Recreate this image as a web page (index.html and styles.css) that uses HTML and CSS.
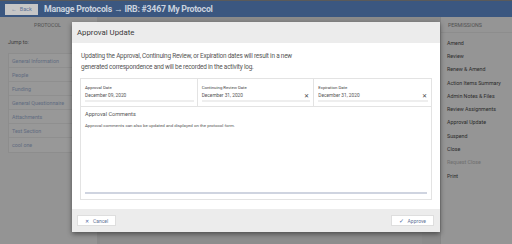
FILE: index.html
```html
<!DOCTYPE html>
<html lang="en">
<head>
<meta charset="utf-8">
<title>Approval Update</title>
<link rel="stylesheet" href="styles.css">
</head>
<body>
<header class="topbar">
  <button class="back-btn"><span class="arrow">←</span> Back</button>
  <h1 class="page-title">Manage Protocols → IRB: #3467 My Protocol</h1>
</header>
<div class="workspace">
  <aside class="nav-pane">
    <div class="pane-tab">PROTOCOL</div>
    <div class="jump-label">Jump to:</div>
    <ul class="section-list">
      <li>General Information</li>
      <li>People</li>
      <li>Funding</li>
      <li>General Questionnaire</li>
      <li>Attachments</li>
      <li>Test Section</li>
      <li>cool one</li>
    </ul>
  </aside>
  <main class="center-pane">
    <div class="content-card"></div>
  </main>
  <aside class="perm-pane">
    <div class="pane-tab perm-tab">PERMISSIONS</div>
    <ul class="perm-list">
      <li>Amend</li>
      <li>Review</li>
      <li>Renew &amp; Amend</li>
      <li>Action Items Summary</li>
      <li>Admin Notes &amp; Files</li>
      <li>Review Assignments</li>
      <li>Approval Update</li>
      <li>Suspend</li>
      <li>Close</li>
      <li class="disabled">Request Close</li>
      <li>Print</li>
    </ul>
  </aside>
  <div class="backdrop"></div>
</div>

<div class="modal">
  <div class="modal-header">Approval Update</div>
  <div class="modal-body">
    <p class="intro">Updating the Approval, Continuing Review, or Expiration dates will result in a new generated correspondence and will be recorded in the activity log.</p>
    <div class="form-box">
      <div class="date-row">
        <div class="date-cell">
          <div class="field-label">Approval Date</div>
          <div class="field-value"><span>December 09, 2020</span></div>
        </div>
        <div class="date-cell">
          <div class="field-label">Continuing Review Date</div>
          <div class="field-value"><span>December 31, 2020</span><span class="clear">✕</span></div>
        </div>
        <div class="date-cell">
          <div class="field-label">Expiration Date</div>
          <div class="field-value"><span>December 31, 2020</span><span class="clear">✕</span></div>
        </div>
      </div>
      <div class="comments">
        <div class="comments-label">Approval Comments</div>
        <div class="comments-help">Approval comments can also be updated and displayed on the protocol form.</div>
        <div class="comments-input"></div>
      </div>
    </div>
  </div>
  <div class="modal-footer">
    <button class="btn"><span class="btn-icon">✕</span>Cancel</button>
    <button class="btn"><span class="btn-icon check">✓</span>Approve</button>
  </div>
</div>
</body>
</html>
```

FILE: styles.css
```css
* { box-sizing: border-box; }
html, body { margin: 0; padding: 0; }
body {
  width: 512px;
  height: 244px;
  overflow: hidden;
  font-family: Roboto, "Liberation Sans", sans-serif;
  background: #e6e6e6;
  position: relative;
}
ul { list-style: none; margin: 0; padding: 0; }

.topbar {
  height: 17px;
  background: #3b5780;
  border-top: 1px solid #5a5a5a;
  display: flex;
  align-items: center;
  padding-left: 5px;
  gap: 6px;
}
.back-btn {
  height: 11px;
  width: 33px;
  border: none;
  background: #c6c6c6;
  color: #5f7396;
  font-family: inherit;
  font-size: 5.5px;
  padding: 0;
  display: flex;
  align-items: center;
  justify-content: center;
  gap: 3px;
}
.page-title {
  margin: 0;
  color: #c9d2de;
  font-size: 8.8px;
  letter-spacing: -0.25px;
  font-weight: 700;
}

.workspace {
  position: relative;
  display: grid;
  grid-template-columns: 97px 1fr 72px;
  height: 227px;
}
.backdrop {
  position: absolute;
  inset: 0;
  background: rgba(0, 0, 0, 0.4);
}

.nav-pane {
  background: #f7f7f7;
  padding-right: 8px;
}
.pane-tab {
  height: 16px;
  display: flex;
  align-items: center;
  justify-content: center;
  font-size: 5.3px;
  color: #8a8a8a;
  padding-left: 6px;
}
.jump-label {
  font-size: 5.3px;
  color: #6a6a6a;
  padding: 6px 0 0 8px;
  height: 20px;
}
.section-list {
  margin-left: 8px;
  background: #fdfdfd;
  border: 1px solid #ececec;
}
.section-list li {
  height: 14px;
  display: flex;
  align-items: center;
  padding-left: 3px;
  font-size: 5.3px;
  color: #a4b5d8;
  border-bottom: 1px solid #efefef;
}
.section-list li:last-child { border-bottom: none; }

.center-pane {
  padding: 17px 18px 0 3px;
}
.content-card {
  height: 100%;
  background: #ececec;
}

.perm-pane {
  background: #f8f8f8;
  border-left: 1px solid #e0e0e0;
}
.perm-tab {
  justify-content: flex-start;
  padding-left: 7px;
  border-bottom: 1px solid #ececec;
}
.perm-list {
  padding: 3px 0 0 6px;
}
.perm-list li {
  height: 13.3px;
  display: flex;
  align-items: center;
  font-size: 5.3px;
  color: #4a4a4a;
}
.perm-list li.disabled { color: #bababa; }

.modal {
  position: absolute;
  top: 22px;
  left: 72px;
  width: 368px;
  height: 210px;
  background: #ffffff;
  box-shadow: 0 2px 5px rgba(0, 0, 0, 0.45);
  display: flex;
  flex-direction: column;
}
.modal-header {
  height: 21px;
  background: #ececec;
  display: flex;
  align-items: center;
  padding-left: 5px;
  font-size: 7.8px;
  color: #3a3a3a;
}
.modal-body {
  flex: 1;
  padding: 8px 8px 9px 8px;
  display: flex;
  flex-direction: column;
}
.intro {
  margin: 0 0 5px 1px;
  font-size: 6.4px;
  letter-spacing: -0.2px;
  line-height: 11px;
  color: #555;
  max-width: 226px;
}
.form-box {
  flex: 1;
  border: 1px solid #e3e3e3;
  display: flex;
  flex-direction: column;
}
.date-row {
  display: grid;
  grid-template-columns: 1fr 1fr 1fr;
  border-bottom: 1px solid #e3e3e3;
}
.date-cell {
  height: 27px;
  padding: 5px 3px 0 4px;
  border-right: 1px solid #e3e3e3;
}
.date-cell:last-child { border-right: none; }
.field-label {
  font-size: 4.3px;
  color: #444;
  height: 8px;
  line-height: 8px;
}
.field-value {
  height: 10px;
  display: flex;
  align-items: center;
  justify-content: space-between;
  font-size: 4.8px;
  color: #555;
  border-bottom: 2px solid #eeeeee;
  padding-bottom: 1px;
}
.clear {
  font-size: 6px;
  color: #444;
  margin-right: 1px;
}
.comments {
  flex: 1;
  padding: 3px 4px 5px 4px;
  display: flex;
  flex-direction: column;
}
.comments-label {
  font-size: 5.6px;
  color: #555;
  line-height: 8px;
}
.comments-help {
  margin-top: 5px;
  font-size: 4.4px;
  color: #555;
  line-height: 6px;
}
.comments-input {
  margin-top: auto;
  height: 2px;
  background: #cfd4e0;
}

.modal-footer {
  height: 23px;
  background: #ececec;
  display: flex;
  align-items: center;
  justify-content: space-between;
  padding: 0 6px 0 5px;
}
.btn {
  height: 11px;
  padding: 0 7px;
  background: #ffffff;
  border: 1px solid #dedede;
  font-family: inherit;
  font-size: 5px;
  color: #5f7396;
  display: flex;
  align-items: center;
  gap: 4px;
}
.btn-icon { font-size: 5px; color: #4a66a0; }
.btn-icon.check { font-size: 6px; }
```
